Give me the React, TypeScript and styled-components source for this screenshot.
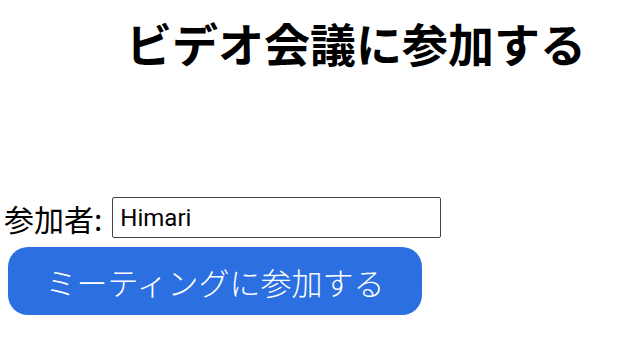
import React from 'react';
import styled, { createGlobalStyle } from 'styled-components';

const GlobalStyle = createGlobalStyle`
  html, body {
    margin: 0;
    padding: 0;
    background: #ffffff;
  }
  body {
    font-family: "Noto Sans", "Noto Sans CJK JP", sans-serif;
    color: #000;
  }
`;

const Page = styled.div`
  width: 640px;
  height: 360px;
  display: flex;
  flex-direction: column;
  overflow: hidden;
`;

const Title = styled.h1`
  margin: 12px 0 0 126px;
  font-family: "Noto Sans CJK JP", sans-serif;
  font-weight: 700;
  font-size: 46px;
  line-height: 60px;
  white-space: nowrap;
`;

const Form = styled.form`
  margin-top: 125px;
  display: flex;
  flex-direction: column;
  align-items: flex-start;
  gap: 9px;
  padding-left: 4px;
`;

const Row = styled.div`
  display: flex;
  align-items: center;
  gap: 10px;
`;

const Label = styled.label`
  font-family: "Noto Sans CJK JP", sans-serif;
  font-size: 30px;
  line-height: 40px;
`;

const Input = styled.input`
  box-sizing: border-box;
  width: 329px;
  height: 41px;
  padding: 0 7px;
  border: 1.5px solid #444;
  border-radius: 2px;
  font-family: "Roboto", "Liberation Sans", sans-serif;
  font-size: 24px;
  color: #000;
  outline: none;
`;

const JoinButton = styled.button`
  margin-left: 4px;
  width: 414px;
  height: 68px;
  border: none;
  border-radius: 20px;
  background: #2b6fe1;
  color: #fff;
  font-family: "Noto Sans CJK JP", sans-serif;
  font-weight: 300;
  font-size: 31px;
  cursor: pointer;
  padding: 0;
`;

export default function App() {
  return (
    <Page>
      <GlobalStyle />
      <Title>ビデオ会議に参加する</Title>
      <Form onSubmit={(e) => e.preventDefault()}>
        <Row>
          <Label htmlFor="name">参加者:</Label>
          <Input id="name" type="text" defaultValue="Himari" />
        </Row>
        <JoinButton type="submit">ミーティングに参加する</JoinButton>
      </Form>
    </Page>
  );
}
